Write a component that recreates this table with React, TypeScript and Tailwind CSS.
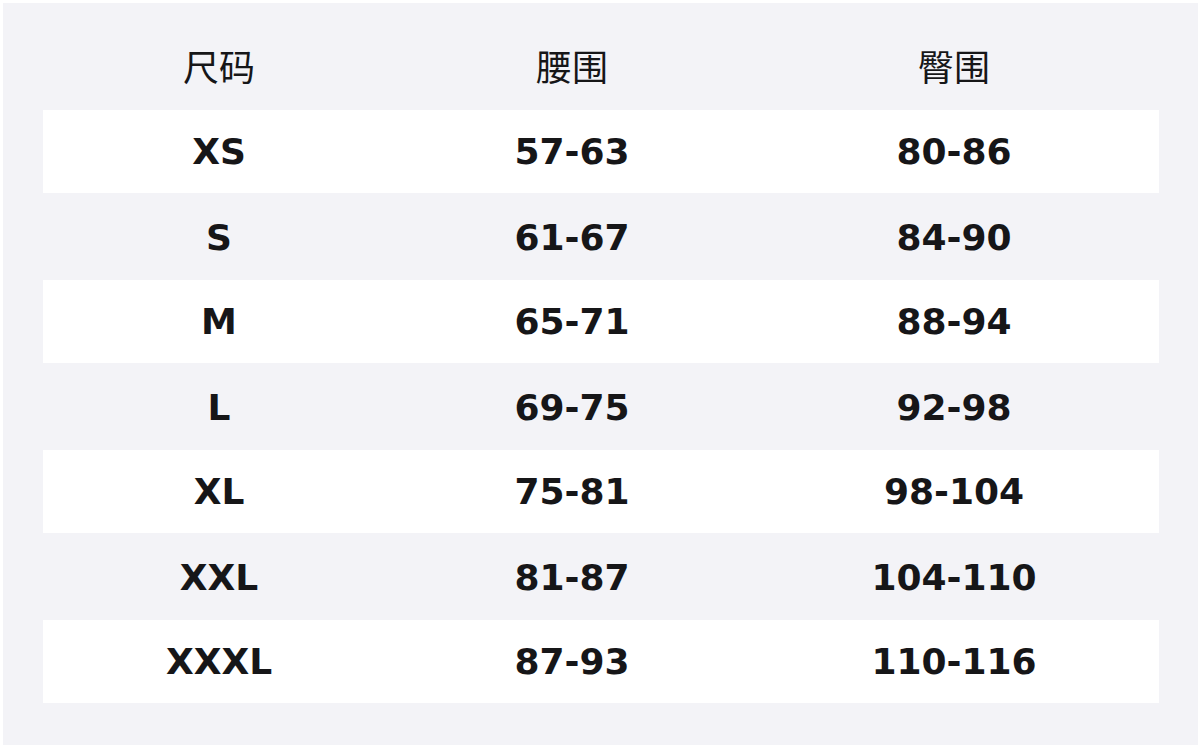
const headers = ['尺码', '腰围', '臀围'];

const rows = [
  ['XS', '57-63', '80-86'],
  ['S', '61-67', '84-90'],
  ['M', '65-71', '88-94'],
  ['L', '69-75', '92-98'],
  ['XL', '75-81', '98-104'],
  ['XXL', '81-87', '104-110'],
  ['XXXL', '87-93', '110-116'],
];

export default function App() {
  return (
    <div className="min-h-screen bg-white p-[3px]">
      <div className="w-[1195px] h-[742px] bg-[#f3f3f7] pt-[22px] pl-[40px] pr-[39px]">
        {/* Header */}
        <div
          className="grid grid-cols-[352px_354px_410px] h-[85px] items-center pb-[6px] text-[36px] text-[#161618]"
          style={{ fontFamily: '"Noto Sans CJK SC", "Noto Sans", sans-serif' }}
        >
          {headers.map((h) => (
            <div key={h} className="text-center leading-none">
              {h}
            </div>
          ))}
        </div>

        {/* Body */}
        {rows.map((row, i) => (
          <div
            key={row[0]}
            className={
              i % 2 === 0
                ? 'grid grid-cols-[352px_354px_410px] h-[85px] items-center bg-white border-b-2 border-[#f3f3f7]'
                : 'grid grid-cols-[352px_354px_410px] h-[85px] items-center'
            }
            style={{ fontFamily: '"DejaVu Sans", "Noto Sans", sans-serif' }}
          >
            {row.map((cell, j) => (
              <div key={j} className="text-center text-[36px] font-bold leading-none text-[#161618]">
                {cell}
              </div>
            ))}
          </div>
        ))}
      </div>
    </div>
  );
}
